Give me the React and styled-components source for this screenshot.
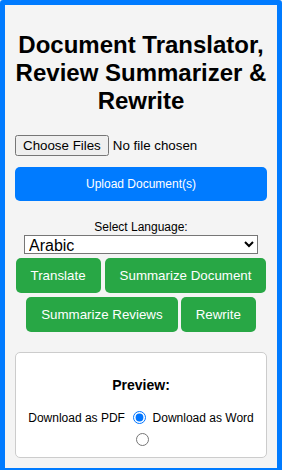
import React from "react";
import styled, { createGlobalStyle } from "styled-components";

const Global = createGlobalStyle`
  html, body { margin: 0; padding: 0; }
  body {
    font-family: "Liberation Sans", Arial, sans-serif;
    font-size: 12px;
    background: #f4f4f4;
  }
`;

const Frame = styled.div`
  box-sizing: border-box;
  min-height: 100vh;
  border: 5px solid #007bff;
  border-radius: 3px;
  background: #f4f4f4;
  padding: 10px;
  color: #000;
`;

const Title = styled.h1`
  margin: 16px 0 20px;
  font-size: 24px;
  font-weight: bold;
  text-align: center;
  line-height: 28px;
`;

const FileInput = styled.input`
  display: block;
  margin: 0;
  font-family: "Liberation Sans", Arial, sans-serif;
  font-size: 13.33px;
`;

const UploadButton = styled.button`
  display: block;
  width: 100%;
  margin: 11px 0 0;
  padding: 10px;
  border: none;
  border-radius: 5px;
  background: #007bff;
  color: #fff;
  font-family: "Liberation Sans", Arial, sans-serif;
  font-size: 12px;
  line-height: 14px;
  cursor: pointer;
`;

const LanguageLabel = styled.label`
  display: block;
  margin-top: 19px;
  text-align: center;
  line-height: 14px;
`;

const LanguageSelect = styled.select`
  display: block;
  box-sizing: border-box;
  width: 234px;
  height: 19px;
  margin: 1px auto 0;
  padding: 0;
  border: 1px solid #767676;
  border-radius: 0;
  background: #fff;
  font-family: "Liberation Sans", Arial, sans-serif;
  font-size: 16px;
  color: #000;
`;

const ButtonRow = styled.div`
  display: flex;
  justify-content: center;
  gap: ${(p) => p.$gap || 4}px;
  margin-top: ${(p) => p.$top || 4}px;
`;

const ActionButton = styled.button`
  padding: 10px 15px;
  border: none;
  border-radius: 5px;
  background: #28a745;
  color: #fff;
  font-family: "Liberation Sans", Arial, sans-serif;
  font-size: 13.33px;
  line-height: 15px;
  white-space: nowrap;
  cursor: pointer;
`;

const PreviewBox = styled.div`
  margin-top: 20px;
  padding: 10px;
  border: 1px solid #ccc;
  border-radius: 5px;
  background: #fff;
  text-align: center;
`;

const PreviewTitle = styled.h3`
  margin: 14px 0 10px;
  font-size: 14px;
  font-weight: bold;
  line-height: 16px;
`;

const Options = styled.div`
  text-align: center;
  line-height: 14px;
`;

const Radio = styled.input`
  margin: 8px 3px 0 5px;
  width: 13px;
  height: 13px;
  vertical-align: -2px;
`;

export default function App() {
  return (
    <>
      <Global />
      <Frame>
        <Title>Document Translator, Review Summarizer &amp; Rewrite</Title>
        <FileInput type="file" multiple />
        <UploadButton>Upload Document(s)</UploadButton>
        <LanguageLabel htmlFor="lang">Select Language:</LanguageLabel>
        <LanguageSelect id="lang" defaultValue="ar">
          <option value="ar">Arabic</option>
          <option value="en">English</option>
          <option value="fr">French</option>
        </LanguageSelect>
        <ButtonRow $top={4}>
          <ActionButton>Translate</ActionButton>
          <ActionButton>Summarize Document</ActionButton>
        </ButtonRow>
        <ButtonRow $top={4} $gap={3}>
          <ActionButton>Summarize Reviews</ActionButton>
          <ActionButton>Rewrite</ActionButton>
        </ButtonRow>
        <PreviewBox>
          <PreviewTitle>Preview:</PreviewTitle>
          <Options>
            Download as PDF <Radio type="radio" name="fmt" defaultChecked /> Download as Word{" "}
            <Radio type="radio" name="fmt" />
          </Options>
        </PreviewBox>
      </Frame>
    </>
  );
}
